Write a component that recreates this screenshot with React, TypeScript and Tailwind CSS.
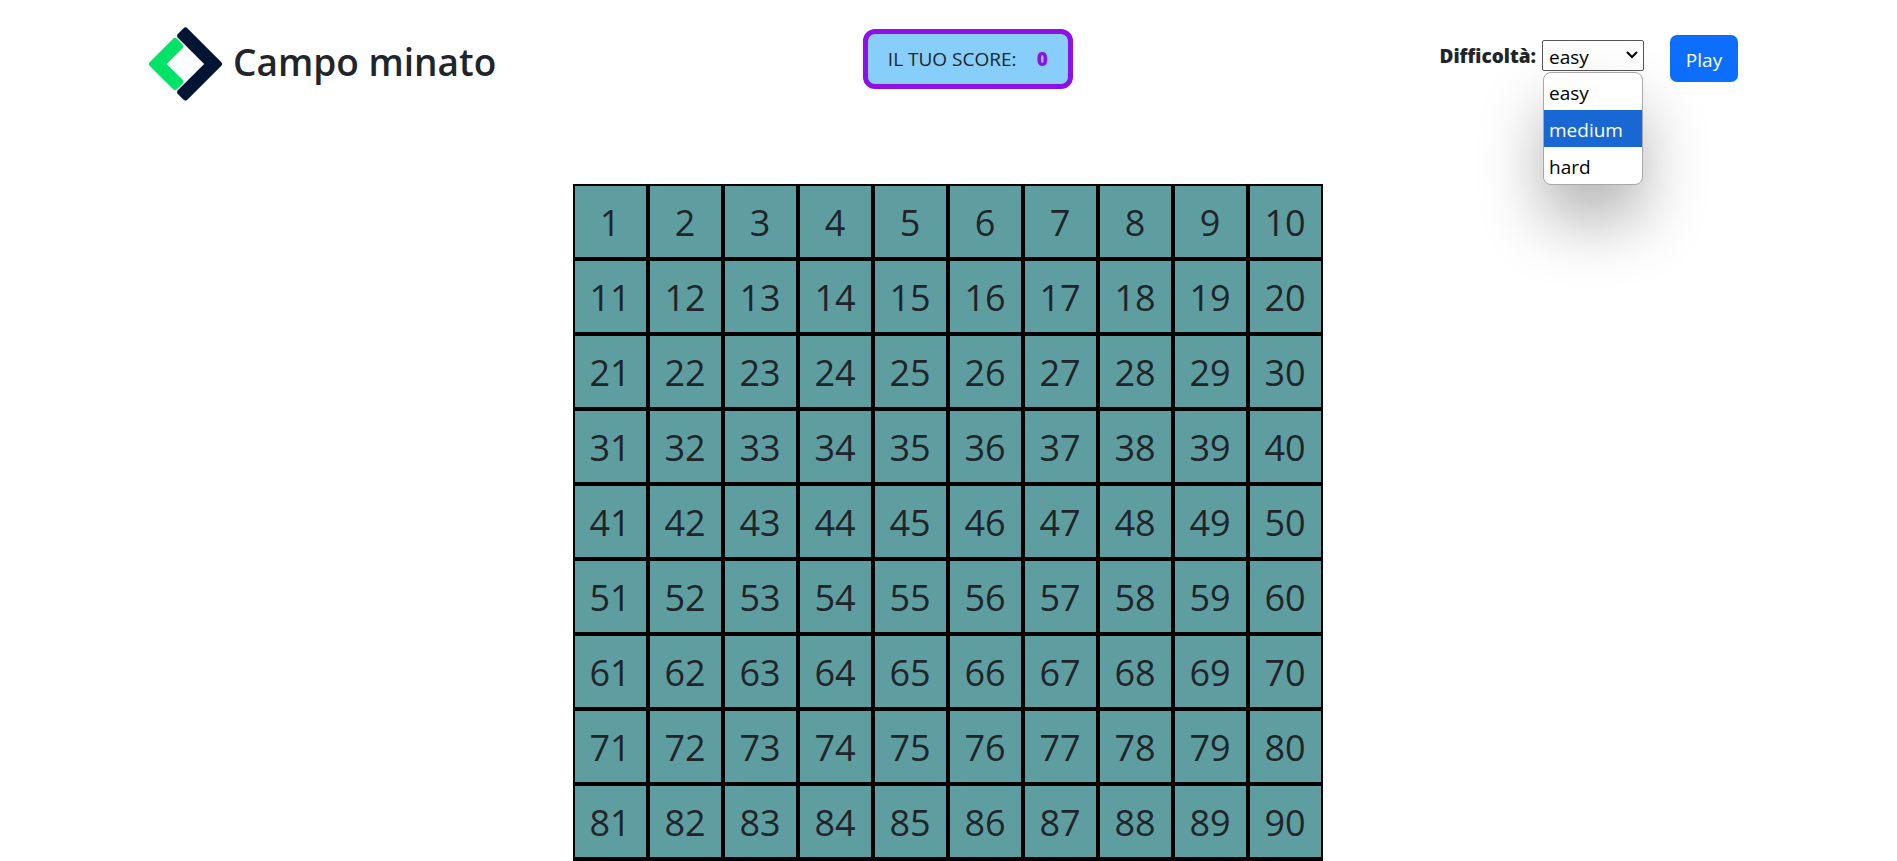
import { useState } from "react";

const levels = ["easy", "medium", "hard"];
const cells = Array.from({ length: 100 }, (_, i) => i + 1);

function Logo() {
  return (
    <svg className="size-[74px]" viewBox="0 0 74 74" aria-hidden="true">
      <g strokeLinejoin="round" strokeWidth="6">
        <path
          d="M26 14 L3 37 L26 60 L31.2 54.7 L13.5 37 L31.2 19.3 Z"
          fill="#00e268"
          stroke="#00e268"
        />
        <path
          d="M36.5 3.5 L70 37 L36.5 70.5 L31.2 65.2 L59.3 37 L31.2 8.8 Z"
          fill="#001433"
          stroke="#001433"
        />
      </g>
    </svg>
  );
}

export default function App() {
  const [level, setLevel] = useState("easy");

  return (
    <div className="bg-white font-['Open_Sans','Noto_Sans',sans-serif] text-[#212529]">
      <header className="flex items-start justify-between pt-[27px] pr-[159px] pl-[149px]">
        <div className="flex items-center gap-2.5">
          <Logo />
          <h1 className="pb-1 text-[37px] leading-[48px] font-semibold">Campo minato</h1>
        </div>

        <div className="mt-0.5 flex h-[60px] w-[210px] items-center justify-between rounded-xl border-5 border-[#8f0fe6] bg-[#87cefa] px-5 text-[19px]">
          <span>IL TUO SCORE:</span>
          <span className="font-extrabold text-[#8f0fe6]">0</span>
        </div>

        <div className="mt-2 flex items-start text-[19px]">
          <label htmlFor="level" className="mt-[9px] mr-1.5 leading-6 font-extrabold">
            Difficoltà:
          </label>
          <div className="relative mt-[5px] mr-[26px]">
            <select
              id="level"
              value={level}
              onChange={(e) => setLevel(e.target.value)}
              className="block h-[31px] w-[102px] appearance-none rounded-xs border border-[#555] bg-white pt-0.5 pl-1.5 leading-6 text-black"
            >
              {levels.map((l) => (
                <option key={l}>{l}</option>
              ))}
            </select>
            <svg
              className="pointer-events-none absolute top-2.5 right-1.5 h-2.5 w-3"
              viewBox="0 0 12 10"
              fill="none"
              stroke="#000"
              strokeWidth="2"
              aria-hidden="true"
            >
              <path d="M1 2 L6 7 L11 2" />
            </svg>
            <ul className="absolute top-8 left-px w-[100px] overflow-hidden rounded-lg border border-[#a8a8a8] bg-white text-black shadow-[0_36px_64px_rgba(0,0,0,0.3)]">
              {levels.map((l) => (
                <li
                  key={l}
                  className={
                    l === "medium"
                      ? "h-[37px] bg-[#1967d2] pl-[5px] leading-[40px] text-white"
                      : "h-[37px] pl-[5px] leading-[40px]"
                  }
                >
                  {l}
                </li>
              ))}
            </ul>
          </div>
          <button className="h-[47px] w-[68px] rounded-[7px] bg-[#0d6efd] pt-1 text-white">Play</button>
        </div>
      </header>

      <main className="mt-[83px] flex justify-center pr-0.5">
        <div className="grid grid-cols-[repeat(10,75px)]">
          {cells.map((n) => (
            <div
              key={n}
              className="flex h-[75px] items-center justify-center border-2 border-black bg-[#5f9ea0] pt-0.5 text-[36px]"
            >
              {n}
            </div>
          ))}
        </div>
      </main>
    </div>
  );
}
